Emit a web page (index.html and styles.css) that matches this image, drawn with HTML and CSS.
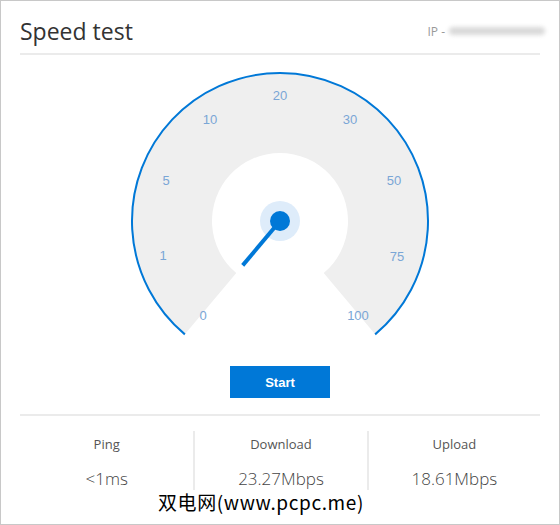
FILE: index.html
```html
<!DOCTYPE html>
<html lang="en">
<head>
    <meta charset="UTF-8">
    <title>Speed test</title>
    <link rel="stylesheet" href="styles.css">
</head>
<body>

    <div class="card">
        <div class="header">
            <h1>Speed test</h1>
            <div class="ip">IP - <span class="ip-blur"></span></div>
        </div>

        <div class="gauge">
            <svg width="300" height="282" viewBox="0 0 300 282">
                <!-- dial -->
                <path class="dial" d="M 54.87 279.37 A 148 148 0 1 1 245.13 279.37 L 193.71 218.09 A 68 68 0 1 0 106.29 218.09 Z"/>
                <path class="rim" d="M 54.87 279.37 A 148 148 0 1 1 245.13 279.37"/>

                <!-- scale -->
                <g class="scale">
                    <text x="73" y="260">0</text>
                    <text x="33" y="200">1</text>
                    <text x="36" y="125">5</text>
                    <text x="80" y="64">10</text>
                    <text x="150" y="40">20</text>
                    <text x="220" y="64">30</text>
                    <text x="264" y="125">50</text>
                    <text x="267" y="201">75</text>
                    <text x="228" y="260">100</text>
                </g>

                <!-- needle -->
                <circle class="halo" cx="150" cy="166" r="20"/>
                <line class="needle" x1="150" y1="166" x2="112.7" y2="210.4"/>
                <circle class="hub" cx="150" cy="166" r="10"/>
            </svg>
        </div>

        <div class="actions">
            <button class="btn-start">Start</button>
        </div>

        <div class="stats">
            <div class="stat">
                <div class="stat-label">Ping</div>
                <div class="stat-value">&lt;1ms</div>
            </div>
            <div class="stat">
                <div class="stat-label">Download</div>
                <div class="stat-value">23.27Mbps</div>
            </div>
            <div class="stat">
                <div class="stat-label">Upload</div>
                <div class="stat-value">18.61Mbps</div>
            </div>
        </div>

        <div class="watermark">双电网(www.pcpc.me)</div>
    </div>

</body>
</html>
```

FILE: styles.css
```css
body {
    margin: 0;
    padding: 0;
    background-color: #fff;
    font-family: 'Open Sans', 'Noto Sans', sans-serif;
}

.card {
    position: relative;
    width: 560px;
    height: 525px;
    box-sizing: border-box;
    border: 1px solid #c8c8c8;
    padding: 0 19px;
    background-color: #fff;
}

.header {
    display: flex;
    justify-content: space-between;
    align-items: center;
    height: 52px;
    border-bottom: 2px solid #ebebeb;
}

h1 {
    margin: 0;
    padding-top: 7px;
    font-size: 23px;
    font-weight: 400;
    color: #333;
}

.ip {
    display: flex;
    align-items: center;
    margin-right: -5px;
    padding-top: 8px;
    font-size: 12px;
    color: #999;
}

.ip-blur {
    display: inline-block;
    width: 96px;
    height: 8px;
    margin-left: 4px;
    background-color: #d9d9d9;
    border-radius: 4px;
    filter: blur(2px);
}

.gauge {
    display: flex;
    justify-content: center;
}

.gauge svg {
    display: block;
}

.dial {
    fill: #efefef;
}

.rim {
    fill: none;
    stroke: #0078d7;
    stroke-width: 2;
}

.scale text {
    font-family: 'Liberation Sans', Arial, sans-serif;
    font-size: 13px;
    fill: #7aa6d6;
    text-anchor: middle;
    dominant-baseline: central;
}

.halo {
    fill: #deecfa;
}

.needle {
    stroke: #0078d7;
    stroke-width: 4;
}

.hub {
    fill: #0078d7;
}

.actions {
    display: flex;
    justify-content: center;
    margin-top: 29px;
}

.btn-start {
    width: 100px;
    height: 32px;
    border: none;
    background-color: #0078d7;
    color: #fff;
    font-family: 'Liberation Sans', Arial, sans-serif;
    font-size: 13px;
    font-weight: 700;
}

.stats {
    display: grid;
    grid-template-columns: repeat(3, 1fr);
    margin-top: 16px;
    padding-top: 15px;
    border-top: 2px solid #ebebeb;
}

.stat {
    height: 59px;
    text-align: center;
}

.stat + .stat {
    border-left: 2px solid #ebebeb;
}

.stat-label {
    font-size: 13px;
    color: #555;
    line-height: 26px;
}

.stat-value {
    margin-top: 10px;
    font-size: 17px;
    font-weight: 300;
    color: #444;
    line-height: 24px;
}

.watermark {
    position: absolute;
    left: 157px;
    top: 487px;
    font-family: 'Noto Sans CJK SC', sans-serif;
    font-size: 19px;
    letter-spacing: 0.6px;
    color: #000;
}
```
